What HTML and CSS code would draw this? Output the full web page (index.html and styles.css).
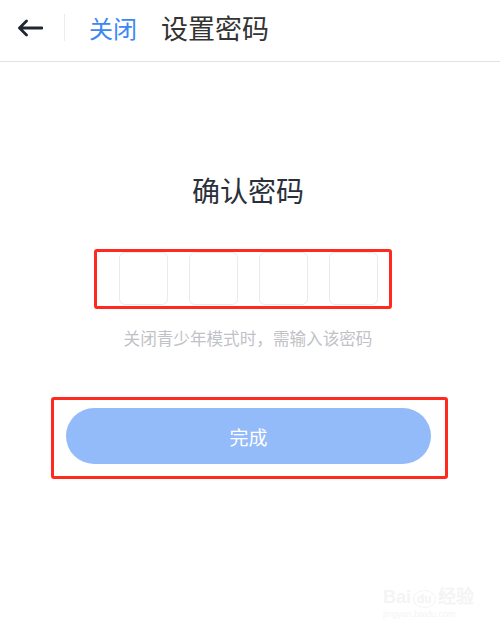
FILE: index.html
```html
<!DOCTYPE html>
<html lang="zh-CN">
<head>
<meta charset="utf-8">
<title>设置密码</title>
<link rel="stylesheet" href="styles.css">
</head>
<body>
<div class="page">
  <header class="topbar">
    <svg class="back" width="26" height="18" viewBox="0 0 26 18">
      <path d="M25 9 H2.5 M9.5 2 L2.5 9 L9.5 16" fill="none" stroke="#1f2731" stroke-width="2.8" stroke-linecap="round" stroke-linejoin="round"/>
    </svg>
    <span class="divider"></span>
    <span class="close">关闭</span>
    <span class="title">设置密码</span>
  </header>
  <main class="content">
    <h1 class="heading">确认密码</h1>
    <div class="mark mark-code">
      <div class="codes">
        <div class="cell"></div>
        <div class="cell"></div>
        <div class="cell"></div>
        <div class="cell"></div>
      </div>
    </div>
    <p class="hint">关闭青少年模式时，需输入该密码</p>
    <div class="mark mark-btn">
      <button class="done">完成</button>
    </div>
  </main>
  <div class="watermark">
    <div class="wm-logo">Bai<span class="wm-du">du</span>经验</div>
    <div class="wm-url">jingyan.baidu.com</div>
  </div>
</div>
</body>
</html>
```
FILE: styles.css
```css
* { box-sizing: border-box; }
html, body { margin: 0; padding: 0; background: #fff; }
body {
  font-family: "Noto Sans CJK SC", "Noto Sans", sans-serif;
  width: 500px;
  height: 640px;
  overflow: hidden;
}
.page { position: relative; width: 500px; height: 640px; }
.topbar {
  height: 62px;
  border-bottom: 1px solid #e2e2e2;
  display: flex;
  align-items: center;
  padding: 0 0 6px 17px;
}
.back { display: block; flex: none; }
.divider {
  width: 1px;
  height: 27px;
  background: #ececec;
  margin-left: 21px;
  flex: none;
}
.close {
  margin-left: 24px;
  font-size: 24px;
  line-height: 28px;
  color: #3c87f3;
}
.title {
  margin-left: 24px;
  font-size: 27px;
  line-height: 30px;
  color: #333;
}
.content {
  display: flex;
  flex-direction: column;
  align-items: center;
  padding: 111px 4px 0 0;
}
.heading {
  margin: 0;
  font-weight: normal;
  font-size: 28px;
  line-height: 34px;
  color: #2a3039;
}
.mark {
  border: 3px solid #ff2a1f;
  border-radius: 3px;
  align-self: flex-start;
}
.mark-code {
  margin: 42px 0 0 94px;
  padding: 0 11px 1px 22px;
}
.codes { display: flex; gap: 21px; }
.cell {
  width: 49px;
  height: 53px;
  border: 1px solid #ebebeb;
  border-radius: 6px;
}
.hint {
  margin: 20px 0 0 0;
  font-size: 16.6px;
  line-height: 18px;
  color: #bfc2c6;
}
.mark-btn {
  margin: 50px 0 0 51px;
  padding: 8px 14px 12px 12px;
}
.done {
  display: block;
  width: 365px;
  height: 56px;
  border: none;
  border-radius: 28px;
  background: #93bbfa;
  color: #fff;
  font-family: inherit;
  font-size: 19px;
  padding: 0;
}
.watermark {
  position: absolute;
  left: 383px;
  top: 588px;
  color: #f4f4f4;
  line-height: 1;
}
.wm-logo { font-size: 18px; font-family: "Liberation Sans", sans-serif; font-weight: bold; }
.wm-du { font-size: 12px; border: 1px solid #f4f4f4; border-radius: 50%; padding: 1px 3px; margin: 0 2px; }
.wm-url { font-size: 9px; font-family: "Liberation Sans", sans-serif; margin-top: 4px; }
```
